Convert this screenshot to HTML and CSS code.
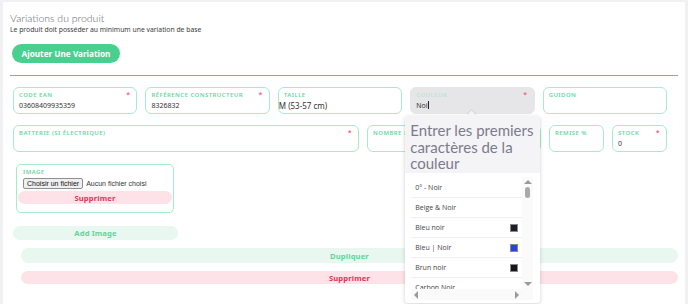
FILE: index.html
```html
<!DOCTYPE html>
<html lang="fr">
<head>
    <meta charset="UTF-8">
    <title>Variations du produit</title>
    <link rel="stylesheet" href="styles.css">
</head>
<body>
    <div class="card">
        <h2 class="title">Variations du produit</h2>
        <p class="subtitle">Le produit doit posséder au minimum une variation de base</p>
        <button class="btn-add">Ajouter Une Variation</button>

        <hr class="divider">

        <div class="row">
            <div class="field">
                <label>Code EAN <span class="req">*</span></label>
                <div class="value">03608409935359</div>
            </div>
            <div class="field">
                <label>Référence constructeur <span class="req">*</span></label>
                <div class="value">8326832</div>
            </div>
            <div class="field">
                <label>Taille</label>
                <div class="value flush">M (53-57 cm)</div>
            </div>
            <div class="field field-active">
                <label>Couleur <span class="req">*</span></label>
                <div class="value">Noi<span class="caret"></span></div>

                <!-- liste de suggestions -->
                <div class="dropdown">
                    <div class="dropdown-head">Entrer les premiers caractères de la couleur</div>
                    <div class="dropdown-body">
                        <div class="dropdown-scroll">
                            <ul class="options">
                                <li>0° - Noir</li>
                                <li>Beige &amp; Noir</li>
                                <li>Bleu noir <span class="swatch" style="background:#1b1f2a"></span></li>
                                <li>Bleu | Noir <span class="swatch" style="background:#2743e3"></span></li>
                                <li>Brun noir <span class="swatch" style="background:#15171c"></span></li>
                                <li>Carbon Noir</li>
                            </ul>
                            <div class="vbar">
                                <span class="arrow up"></span>
                                <span class="thumb"></span>
                                <span class="arrow down"></span>
                            </div>
                        </div>
                        <div class="hbar">
                            <span class="arrow left"></span>
                            <span class="arrow right"></span>
                        </div>
                    </div>
                </div>
            </div>
            <div class="field">
                <label>Guidon</label>
                <div class="value"></div>
            </div>
        </div>

        <div class="row">
            <div class="field w-batt">
                <label>Batterie (si électrique) <span class="req">*</span></label>
                <div class="value"></div>
            </div>
            <div class="field w-nb">
                <label>Nombre de vitesses</label>
                <div class="value"></div>
            </div>
            <div class="field w-small">
                <label>Remise %</label>
                <div class="value"></div>
            </div>
            <div class="field w-small">
                <label>Stock <span class="req">*</span></label>
                <div class="value">0</div>
            </div>
        </div>

        <div class="image-box">
            <label>Image</label>
            <div class="file-input">
                <button class="file-btn">Choisir un fichier</button>
                <span>Aucun fichier choisi</span>
            </div>
            <button class="pill pill-red">Supprimer</button>
        </div>

        <button class="pill pill-green add-image">Add Image</button>

        <div class="actions">
            <button class="pill pill-green">Dupliquer</button>
            <button class="pill pill-red">Supprimer</button>
        </div>
    </div>
</body>
</html>
```

FILE: styles.css
```css
/* base */
body {
    margin: 0;
    background-color: #f1f1f3;
    font-family: "Noto Sans", Arial, sans-serif;
    color: #333;
    overflow: hidden;
}
.card {
    background-color: #fff;
    margin: 2px 3px 0 3px;
    padding: 9px 7px 0 7px;
    height: 302px;
    box-sizing: border-box;
}
.title {
    font-family: Lato, "Noto Sans", sans-serif;
    font-size: 10.5px;
    font-weight: 300;
    color: #5f5f6b;
    margin: 0;
    line-height: 14px;
}
.subtitle {
    font-size: 6.8px;
    margin: 0;
    color: #3a3a3a;
    line-height: 10px;
}
.btn-add {
    display: block;
    margin: 9px 0 0 2px;
    height: 19px;
    width: 108px;
    border: none;
    border-radius: 10px;
    background-color: #48d08f;
    color: #fff;
    font-family: inherit;
    font-size: 8.2px;
    font-weight: 700;
    padding: 0;
}
.divider {
    border: none;
    border-top: 1px solid #9c9cb8;
    margin: 12px 0 0 0;
}

/* champs */
.row {
    display: flex;
    gap: 8px;
    margin: 11px 11px 0 3px;
}
.field {
    position: relative;
    flex: 1;
    height: 27px;
    box-sizing: border-box;
    border: 1px solid #a4eccb;
    border-radius: 6px;
    padding: 3px 6px 0 5px;
}
.field label {
    display: flex;
    justify-content: space-between;
    font-size: 6px;
    font-weight: 600;
    text-transform: uppercase;
    letter-spacing: 0.45px;
    color: #6bd6a2;
    line-height: 8px;
    white-space: nowrap;
    overflow: hidden;
}
.req {
    color: #f0637e;
    font-size: 7px;
}
.value {
    font-size: 7px;
    line-height: 11px;
    color: #333;
    margin-top: 1px;
}
.value.flush {
    margin-left: -5px;
    font-size: 8px;
}
.field-active {
    background-color: #e6e6e8;
    border-color: #e6e6e8;
}
.field-active label {
    color: #bde5cf;
}
.caret {
    display: inline-block;
    width: 1px;
    height: 8px;
    background-color: #222;
    vertical-align: -1px;
}
.w-batt { flex: 0 0 346px; }
.w-nb { flex: 0 0 174px; }
.w-small { flex: 0 0 55px; }

/* liste déroulante */
.dropdown {
    position: absolute;
    top: 28px;
    left: -6px;
    width: 135px;
    height: 187px;
    box-sizing: border-box;
    background-color: #fff;
    box-shadow: 0 1px 4px rgba(0, 0, 0, 0.18);
    border-radius: 3px;
    z-index: 5;
}
.dropdown::before {
    content: "";
    position: absolute;
    top: -4px;
    left: 63px;
    width: 7px;
    height: 7px;
    background-color: #f4f4f6;
    transform: rotate(45deg);
    box-shadow: -1px -1px 1px rgba(0, 0, 0, 0.08);
}
.dropdown-head {
    position: relative;
    height: 57px;
    box-sizing: border-box;
    background-color: #f4f4f6;
    font-family: Lato, sans-serif;
    font-size: 15px;
    line-height: 16.5px;
    color: #7b7b8d;
    padding: 6px 4px 0 5px;
    border-radius: 3px 3px 0 0;
}
.dropdown-body {
    padding: 4px 7px 0 6px;
}
.dropdown-scroll {
    display: flex;
    height: 112px;
    overflow: hidden;
}
.options {
    list-style: none;
    margin: 0;
    padding: 1px 0 0 0;
    flex: 1;
}
.options li {
    display: flex;
    justify-content: space-between;
    align-items: center;
    height: 20px;
    box-sizing: border-box;
    border-bottom: 1px solid #f0f0f3;
    padding: 0 4px 0 4px;
    font-family: "Open Sans", sans-serif;
    font-size: 7px;
    color: #444;
}
.swatch {
    width: 8px;
    height: 8px;
    border: 1px solid #888;
    box-sizing: border-box;
}
.vbar {
    width: 11px;
    display: flex;
    flex-direction: column;
    align-items: center;
    background-color: #fafafa;
}
.thumb {
    width: 5px;
    height: 11px;
    border-radius: 3px;
    background-color: #a9a9a9;
    margin-top: 3px;
}
.arrow {
    width: 0;
    height: 0;
    border: 4px solid transparent;
}
.arrow.up {
    border-bottom-color: #9a9a9a;
    border-top-width: 0;
    margin-top: 3px;
}
.arrow.down {
    border-top-color: #9a9a9a;
    border-bottom-width: 0;
    margin-top: auto;
    margin-bottom: 3px;
}
.hbar {
    display: flex;
    justify-content: space-between;
    align-items: center;
    height: 11px;
    background-color: #fafafa;
    padding: 0 14px 0 3px;
}
.arrow.left {
    border-right-color: #9a9a9a;
    border-left-width: 0;
}
.arrow.right {
    border-left-color: #9a9a9a;
    border-right-width: 0;
}

/* image */
.image-box {
    width: 158px;
    height: 49px;
    box-sizing: border-box;
    margin: 12px 0 0 6px;
    border: 1px solid #a4eccb;
    border-radius: 5px;
    padding: 3px 1px 0 1px;
}
.image-box label {
    display: block;
    font-size: 6px;
    font-weight: 600;
    letter-spacing: 0.45px;
    color: #6bd6a2;
    text-transform: uppercase;
    padding-left: 5px;
    line-height: 8px;
}
.file-input {
    display: flex;
    align-items: center;
    gap: 3px;
    padding-left: 5px;
    font-family: "Liberation Sans", Arial, sans-serif;
    font-size: 7px;
    color: #333;
    margin-top: 2px;
}
.file-btn {
    font-family: inherit;
    font-size: 7px;
    padding: 0 3px;
    height: 11px;
    border: 1px solid #8f8f8f;
    border-radius: 2px;
    background-color: #efefef;
    color: #111;
}

/* boutons */
.pill {
    display: block;
    width: 100%;
    border: none;
    border-radius: 8px;
    font-family: inherit;
    font-size: 7.6px;
    font-weight: 700;
    letter-spacing: 0.15px;
    padding: 0;
}
.pill-red {
    background-color: #fde2e7;
    color: #e6335b;
    height: 13px;
}
.pill-green {
    background-color: #e8f8f0;
    color: #5ed49b;
    height: 14px;
}
.image-box .pill-red {
    margin-top: 2px;
}
.add-image {
    width: 165px;
    margin: 13px 0 0 3px;
}
.actions {
    margin: 8px 0 0 11px;
    width: 657px;
}
.actions .pill-green {
    height: 15px;
}
.actions .pill-red {
    margin-top: 8px;
    height: 13px;
}
```
